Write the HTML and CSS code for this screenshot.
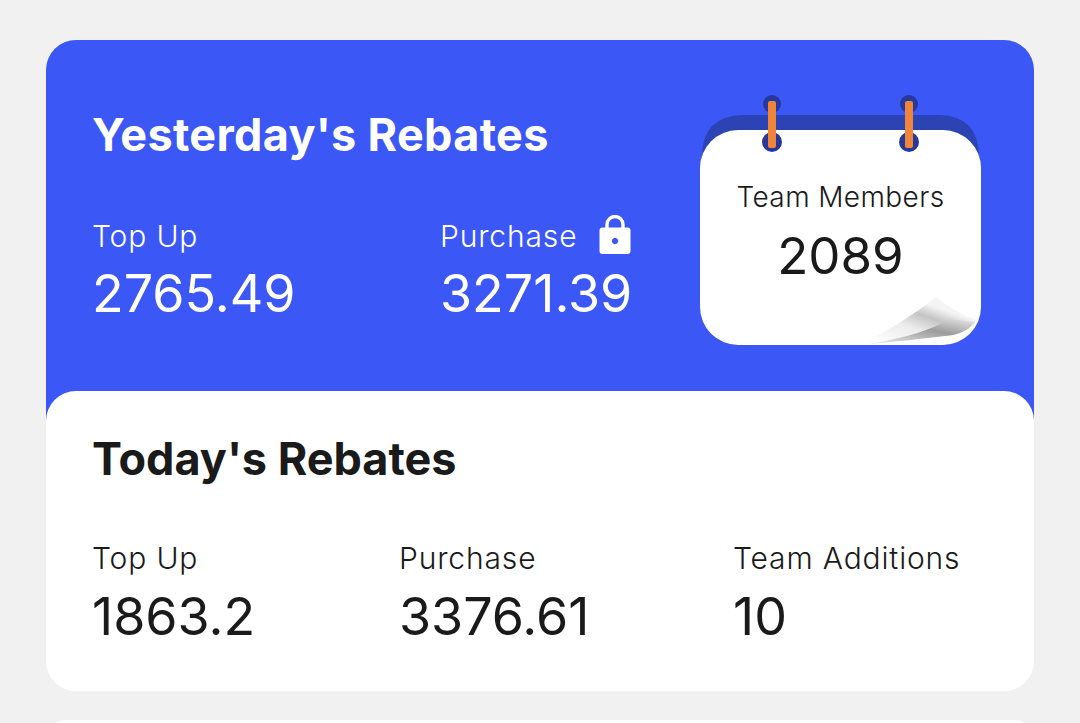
FILE: index.html
```html
<!DOCTYPE html>
<html lang="en">
<head>
<meta charset="utf-8">
<title>Rebates</title>
<link rel="stylesheet" href="styles.css">
</head>
<body>
<main class="card">
  <section class="hero">
    <div class="hero-main">
      <h2 class="title title-light">Yesterday's Rebates</h2>
      <div class="hero-stats">
        <div class="stat">
          <div class="label">Top Up</div>
          <div class="value">2765.49</div>
        </div>
        <div class="stat">
          <div class="label label-lock">Purchase
            <svg class="lock" viewBox="0 0 32 40" aria-hidden="true">
              <path d="M8 15V9.500a8 8 0 0 1 16 0V15" fill="none" stroke="#fff" stroke-width="3.400"/>
              <path fill-rule="evenodd" fill="#fff" d="M3.500 12.500H28.500A3 3 0 0 1 31.500 15.500V36A3 3 0 0 1 28.500 39H3.500A3 3 0 0 1 .5 36V15.500A3 3 0 0 1 3.500 12.500ZM16 22.800a3.200 3.200 0 1 0 .01 0Z"/>
            </svg>
          </div>
          <div class="value">3271.39</div>
        </div>
      </div>
    </div>
    <div class="calendar">
      <svg class="calendar-art" viewBox="0 0 284 254" aria-hidden="true">
        <defs>
          <linearGradient id="curl" x1="0.1" y1="0.95" x2="0.7" y2="0.25">
            <stop offset="0" stop-color="#ffffff"/>
            <stop offset="0.5" stop-color="#ececec"/>
            <stop offset="0.78" stop-color="#c4c4c4"/>
            <stop offset="1" stop-color="#f4f4f4"/>
          </linearGradient>
          <linearGradient id="shade" x1="0.1" y1="1" x2="0.95" y2="0.1">
            <stop offset="0" stop-color="#e8e8e8"/>
            <stop offset="0.6" stop-color="#9c9c9c"/>
            <stop offset="1" stop-color="#dcdcdc"/>
          </linearGradient>
        </defs>
        <path fill="#2c43b4" d="M3 60Q4 21 44 20H240Q279 21 280 60V90H3Z"/>
        <rect x="1" y="35" width="281" height="215" rx="38" fill="#fff"/>
        <circle cx="73" cy="9" r="9" fill="#24389e"/>
        <circle cx="210" cy="9" r="9" fill="#24389e"/>
        <circle cx="73" cy="47" r="10" fill="#27379a"/>
        <circle cx="210" cy="47" r="10" fill="#27379a"/>
        <rect x="69" y="6" width="8" height="47" rx="2" fill="#f0853a"/>
        <rect x="206" y="6" width="8" height="47" rx="2" fill="#f0853a"/>
        <path fill="url(#curl)" d="M160 250Q205 228 237 202Q256 218 278 225Q270 236 255 240Q210 244 160 250Z"/>
        <path fill="url(#shade)" d="M170 249Q225 240 250 224Q262 226 276 227Q270 236 254 240Q215 245 170 249Z"/>
      </svg>
      <div class="calendar-text">
        <div class="calendar-label">Team Members</div>
        <div class="calendar-value">2089</div>
      </div>
    </div>
  </section>
  <section class="today">
    <h2 class="title title-dark">Today's Rebates</h2>
    <div class="today-stats">
      <div class="stat">
        <div class="label">Top Up</div>
        <div class="value">1863.2</div>
      </div>
      <div class="stat">
        <div class="label">Purchase</div>
        <div class="value">3376.61</div>
      </div>
      <div class="stat">
        <div class="label">Team Additions</div>
        <div class="value">10</div>
      </div>
    </div>
  </section>
</main>
<div class="next-clip"><div class="next-card"></div></div>
</body>
</html>
```

FILE: styles.css
```css
* { box-sizing: border-box; }

html, body { height: 100%; }

body {
  margin: 0;
  padding: 40px 46px 0;
  background: #f1f1f1;
  font-family: Inter, "Liberation Sans", sans-serif;
  overflow: hidden;
}

.card {
  height: 651px;
  background: linear-gradient(#3b57f5 0 60%, #fff 60%);
  border-radius: 30px;
  display: flex;
  flex-direction: column;
  overflow: hidden;
}

.hero {
  height: 351px;
  padding: 55px 51px 0 46px;
  display: flex;
  justify-content: space-between;
  color: #fff;
}

.hero-main { padding-top: 16px; }

.title {
  margin: 0;
  font-size: 45px;
  line-height: 48px;
  font-weight: 700;
}

.title-light { letter-spacing: 0.33px; }

.title-dark { color: #1a1a1a; }

.hero-stats {
  margin-top: 60px;
  display: grid;
  grid-template-columns: 348px auto;
}

.label {
  font-size: 30px;
  line-height: 34px;
  font-weight: 300;
  letter-spacing: 0.85px;
}

.label-lock {
  display: flex;
  align-items: center;
  gap: 22px;
  height: 34px;
}

.lock {
  width: 32px;
  height: 40px;
  flex: none;
  margin-top: -2px;
}

.value {
  font-size: 52px;
  line-height: 58px;
  font-weight: 400;
  margin-top: 12px;
}

.calendar {
  position: relative;
  width: 284px;
  height: 254px;
  flex: none;
  color: #1a1a1a;
}

.calendar-art {
  position: absolute;
  inset: 0;
  width: 100%;
  height: 100%;
}

.calendar-text {
  position: relative;
  padding-top: 85px;
  padding-right: 1px;
  text-align: center;
}

.calendar-label {
  font-size: 28px;
  line-height: 34px;
  font-weight: 300;
  letter-spacing: 0.4px;
}

.calendar-value {
  font-size: 51px;
  line-height: 58px;
  font-weight: 400;
  margin-top: 13px;
}

.today {
  flex: 1;
  background: #fff;
  border-radius: 30px;
  padding: 44px 46px 0;
  color: #1a1a1a;
}

.today-stats {
  margin-top: 58px;
  display: grid;
  grid-template-columns: 307px 334px auto;
}

.today-stats .label { font-weight: 350; }

.today-stats .value { margin-top: 13px; }

.next-clip {
  height: 3px;
  margin-top: 29px;
  overflow: hidden;
}

.next-card {
  height: 40px;
  background: #fff;
  border-radius: 30px;
}
```
